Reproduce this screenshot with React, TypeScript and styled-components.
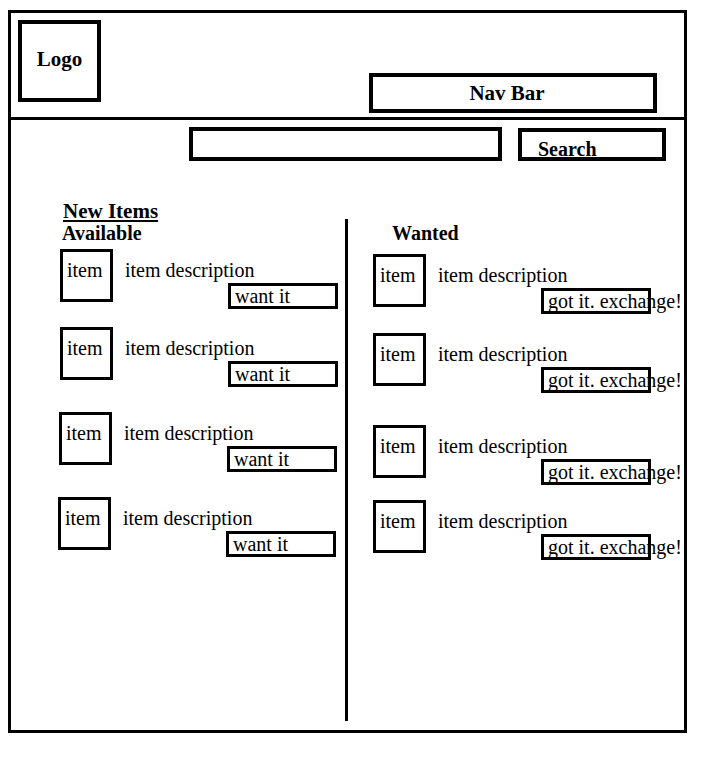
import React from "react";
import styled, { createGlobalStyle } from "styled-components";

const GlobalStyle = createGlobalStyle`
  html, body {
    margin: 0;
    padding: 0;
    background: #ffffff;
  }
  body {
    font-family: "Liberation Serif", "Times New Roman", serif;
    font-size: 20px;
    color: #000000;
  }
  * { box-sizing: border-box; }
`;

const Frame = styled.div`
  margin: 10px 0 0 8px;
  width: 679px;
  height: 723px;
  border: 3px solid #000;
  display: flex;
  flex-direction: column;
`;

const Header = styled.header`
  flex: 0 0 107px;
  border-bottom: 3px solid #000;
  display: flex;
  justify-content: space-between;
  padding: 7px 27px 0 7px;
`;

const Logo = styled.div`
  width: 83px;
  height: 82px;
  border: 4px solid #000;
  display: flex;
  align-items: center;
  justify-content: center;
  padding-bottom: 4px;
  font-weight: bold;
  font-size: 21px;
  line-height: 23px;
`;

const NavBox = styled.nav`
  align-self: flex-end;
  margin-bottom: 4px;
  width: 288px;
  height: 40px;
  border: 4px solid #000;
  display: flex;
  align-items: center;
  justify-content: center;
  padding-right: 12px;
  font-weight: bold;
  font-size: 21px;
  line-height: 23px;
`;

const SearchRow = styled.div`
  flex: 0 0 auto;
  display: flex;
  align-items: flex-end;
  gap: 16px;
  padding: 7px 18px 0 178px;
`;

const SearchInput = styled.input`
  width: 313px;
  height: 34px;
  border: 4px solid #000;
  border-radius: 0;
  padding: 0 6px;
  margin: 0;
  outline: none;
  background: #fff;
  font-family: inherit;
  font-size: 20px;
`;

const SearchButton = styled.button`
  display: block;
  width: 148px;
  height: 33px;
  margin: 0;
  border: 4px solid #000;
  border-radius: 0;
  background: #fff;
  color: #000;
  padding: 9px 0 0 16px;
  text-align: left;
  font-family: inherit;
  font-weight: bold;
  font-size: 20px;
  line-height: 16px;
  cursor: pointer;
`;

const Content = styled.main`
  flex: 1;
  display: flex;
  flex-direction: column;
  min-height: 0;
`;

const SectionTitle = styled.h2`
  margin: 42px 0 0 52px;
  font-size: 21px;
  font-weight: bold;
  line-height: 16px;
  text-decoration: underline;
  text-underline-offset: 2px;
`;

const Columns = styled.div`
  flex: 1;
  display: flex;
  margin-bottom: 9px;
`;

const Column = styled.section<{ $width?: number }>`
  ${(p) => (p.$width ? `flex: 0 0 ${p.$width}px;` : "flex: 1;")}
  display: flex;
  flex-direction: column;
  padding-top: 3px;
`;

const Divider = styled.div`
  flex: 0 0 3px;
  background: #000;
`;

const ColumnTitle = styled.h3<{ $indent: number }>`
  margin: 0 0 0 ${(p) => p.$indent}px;
  font-size: 20px;
  font-weight: bold;
  line-height: 23px;
`;

const ItemRow = styled.div<{ $top: number; $indent: number }>`
  display: flex;
  align-items: flex-start;
  margin-top: ${(p) => p.$top}px;
  margin-left: ${(p) => p.$indent}px;
`;

const ItemThumb = styled.div`
  flex: 0 0 53px;
  width: 53px;
  height: 53px;
  border: 3px solid #000;
  padding: 7px 0 0 4px;
  line-height: 23px;
`;

const ItemDetails = styled.div`
  display: flex;
  flex-direction: column;
  align-items: flex-start;
  margin-left: 12px;
  padding-top: 10px;
`;

const ItemDescription = styled.div`
  line-height: 23px;
  white-space: nowrap;
`;

const ActionButton = styled.button`
  display: block;
  margin: 1px 0 0 103px;
  width: 110px;
  height: 26px;
  border: 3px solid #000;
  border-radius: 0;
  background: transparent;
  color: #000;
  padding: 0 0 0 4px;
  text-align: left;
  white-space: nowrap;
  overflow: visible;
  font-family: inherit;
  font-size: 20px;
  line-height: 20px;
  cursor: pointer;
`;

type Row = { top: number; indent: number };

const available: Row[] = [
  { top: 4, indent: 49 },
  { top: 18, indent: 49 },
  { top: 25, indent: 48 },
  { top: 25, indent: 47 },
];

const wanted: Row[] = [
  { top: 9, indent: 25 },
  { top: 19, indent: 25 },
  { top: 32, indent: 25 },
  { top: 15, indent: 25 },
];

function Item({ row, action }: { row: Row; action: string }) {
  return (
    <ItemRow $top={row.top} $indent={row.indent}>
      <ItemThumb>item</ItemThumb>
      <ItemDetails>
        <ItemDescription>item description</ItemDescription>
        <ActionButton type="button">{action}</ActionButton>
      </ItemDetails>
    </ItemRow>
  );
}

export default function App() {
  return (
    <>
      <GlobalStyle />
      <Frame>
        <Header>
          <Logo>Logo</Logo>
          <NavBox>Nav Bar</NavBox>
        </Header>
        <SearchRow>
          <SearchInput aria-label="search" />
          <SearchButton type="button">Search</SearchButton>
        </SearchRow>
        <Content>
          <SectionTitle>New Items</SectionTitle>
          <Columns>
            <Column $width={334}>
              <ColumnTitle $indent={51}>Available</ColumnTitle>
              {available.map((r, i) => (
                <Item key={i} row={r} action="want it" />
              ))}
            </Column>
            <Divider />
            <Column>
              <ColumnTitle $indent={44}>Wanted</ColumnTitle>
              {wanted.map((r, i) => (
                <Item key={i} row={r} action="got it. exchange!" />
              ))}
            </Column>
          </Columns>
        </Content>
      </Frame>
    </>
  );
}
